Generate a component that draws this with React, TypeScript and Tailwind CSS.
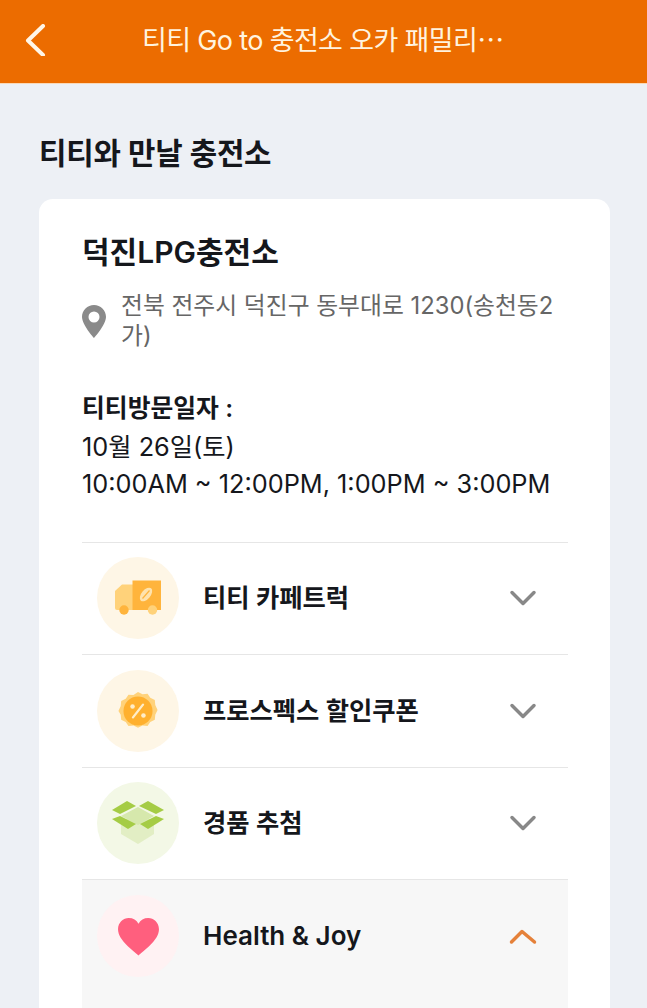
import type { ReactNode } from "react";

const fontStack = { fontFamily: 'Inter, "Noto Sans CJK KR", "Noto Sans", sans-serif' };

const TruckIcon = () => (
  <svg width="48" height="36" viewBox="0 0 48 36">
    <path d="M19 4.500H8L1 11v17a2 2 0 0 0 2 2h16z" fill="#FFD27A" />
    <rect x="18.500" y="0.500" width="28.500" height="29.500" fill="#FFB43C" />
    <circle cx="10" cy="30" r="4.700" fill="#FFB43C" />
    <circle cx="38.500" cy="30" r="4.700" fill="#FFD27A" />
    <ellipse cx="32" cy="14.500" rx="4.500" ry="8" transform="rotate(40 32 14.500)" fill="#FFE3AD" />
    <path d="M28.500 18.500l7-8" stroke="#FFB43C" strokeWidth="1.200" />
  </svg>
);

const CouponIcon = () => (
  <svg width="40" height="40" viewBox="0 0 44 44">
    <path
      d="M22 1l5 2.500 5.500-.5 3 4.500 5 2.500.5 5.500 2.500 5.500-2.500 5 -.5 5.500-5 2.500-3 4.500-5.500-.5-5 2.500-5-2.500-5.500.5-3-4.500-5-2.500-.5-5.500L.5 22 3 16.500l.5-5.500 5-2.500 3-4.500 5.500.5z"
      fill="#FFD27A"
    />
    <circle cx="22" cy="22" r="16" fill="#FFB02E" />
    <path d="M27.500 15L16.500 29" stroke="#FFEDC9" strokeWidth="2.600" strokeLinecap="round" />
    <circle cx="16" cy="17" r="2.500" fill="#FFEDC9" />
    <circle cx="28" cy="27" r="2.500" fill="#FFEDC9" />
  </svg>
);

const BoxIcon = () => (
  <svg width="54" height="44" viewBox="0 0 54 44">
    <path d="M10 18h33v15L27 43 10 33z" fill="#E2EEC4" />
    <path d="M27 6l16 9-16 9-17-9z" fill="#D6E8AC" />
    <path d="M16 0L1 9l8 4 16-8z" fill="#A5CC45" />
    <path d="M37 0l16 9-8 4-17-8z" fill="#A5CC45" />
    <path d="M9 15l-8 3 16 10 8-5z" fill="#A5CC45" />
    <path d="M45 15l8 3-16 10-8-5z" fill="#A5CC45" />
  </svg>
);

const HeartIcon = () => (
  <svg width="43" height="39" viewBox="0 0 44 40">
    <path
      d="M22 39.500C17 34.500 1 24 1 12.500 1 5.500 6.500 1 12 1c4.500 0 8 2 10 6 2-4 5.500-6 10-6 5.500 0 11 4.500 11 11.500C43 24 27 34.500 22 39.500z"
      fill="#FF5F7E"
    />
  </svg>
);

const Chevron = ({ open }: { open?: boolean }) => (
  <svg width="28" height="18" viewBox="0 0 28 18" fill="none">
    <path
      d={open ? "M2.500 15L13 4.500 25.500 15" : "M3 3.500L14 14.500 25 3.500"}
      stroke={open ? "#E5813A" : "#888888"}
      strokeWidth="3.500"
      strokeLinecap="round"
      strokeLinejoin="round"
    />
  </svg>
);

const rows: { label: string; circle: string; icon: ReactNode; open?: boolean }[] = [
  { label: "티티 카페트럭", circle: "bg-[#FEF6E6]", icon: <TruckIcon /> },
  { label: "프로스펙스 할인쿠폰", circle: "bg-[#FEF6E6]", icon: <CouponIcon /> },
  { label: "경품 추첨", circle: "bg-[#F3F8E6]", icon: <BoxIcon /> },
  { label: "Health & Joy", circle: "bg-[#FFF2F3]", icon: <HeartIcon />, open: true },
];

const App = () => {
  return (
    <div className="h-[1008px] w-[647px] overflow-hidden bg-[#EDF0F5]" style={fontStack}>
      <header className="flex h-[84px] items-center border-b border-[#F9D9B8] bg-[#EC6C00] pr-[24px] pb-[4px] pl-[24px]">
        <svg width="22" height="32" viewBox="0 0 22 32" fill="none" className="shrink-0">
          <path d="M19 2L4 16.500 19 31" stroke="#FFF6E8" strokeWidth="4" strokeLinecap="round" strokeLinejoin="round" />
        </svg>
        <h1 className="ml-[96px] text-[27px] leading-none tracking-[-0.65px] whitespace-nowrap text-[#FFF3DF]">
          티티 Go to 충전소 오카 패밀리<span className="font-['Noto_Sans_CJK_KR']">…</span>
        </h1>
      </header>

      <main className="pt-[50px] pr-[37px] pl-[39px]">
        <h2 className="text-[29.800px] leading-[38px] font-semibold tracking-[-0.2px] text-[#15171C]">티티와 만날 충전소</h2>

        <section className="mt-[27px] rounded-t-[14px] bg-white pt-[34px] pr-[42px] pl-[43px]">
          <h3 className="text-[30px] leading-[39px] font-semibold text-[#15171C]">덕진LPG충전소</h3>

          <div className="mt-[19px] flex items-center gap-[15px]">
            <svg width="24" height="33" viewBox="0 0 24 33" className="shrink-0">
              <path
                fillRule="evenodd"
                d="M12 0C5.400 0 0 5.200 0 11.800 0 20 12 33 12 33s12-13 12-21.200C24 5.200 18.600 0 12 0zm0 6.500a5.500 5.500 0 1 1 0 11 5.500 5.500 0 0 1 0-11z"
                fill="#8A8A8A"
              />
            </svg>
            <p className="text-[23.800px] leading-[30px] text-[#666666]">
              전북 전주시 덕진구 동부대로 1230(송천동2가)
            </p>
          </div>

          <div className="mt-[39px] text-[25.300px] leading-[37.500px] text-[#15171C]">
            <p className="text-[24.800px] font-semibold">티티방문일자 :</p>
            <p>10월 26일(토)</p>
            <p>10:00AM ~ 12:00PM, 1:00PM ~ 3:00PM</p>
          </div>

          <ul className="mt-[39px]">
            {rows.map((row) => (
              <li
                key={row.label}
                className={`flex border-t border-[#E6E6E6] pr-[31px] pl-[15px] ${
                  row.open ? "h-[150px] items-start bg-[#F7F7F7] pt-[15px]" : "h-[112.500px] items-center"
                }`}
              >
                <div className={`flex h-[82px] w-[82px] shrink-0 items-center justify-center rounded-full ${row.circle}`}>
                  {row.icon}
                </div>
                <span
                  className={`ml-[24px] flex-1 font-semibold text-[#15171C] ${
                    row.open ? "text-[26px] leading-[82px]" : "text-[25.300px]"
                  }`}
                >
                  {row.label}
                </span>
                <div className={row.open ? "flex h-[82px] items-center" : "flex items-center"}>
                  <Chevron open={row.open} />
                </div>
              </li>
            ))}
          </ul>
        </section>
      </main>
    </div>
  );
};

export default App;
